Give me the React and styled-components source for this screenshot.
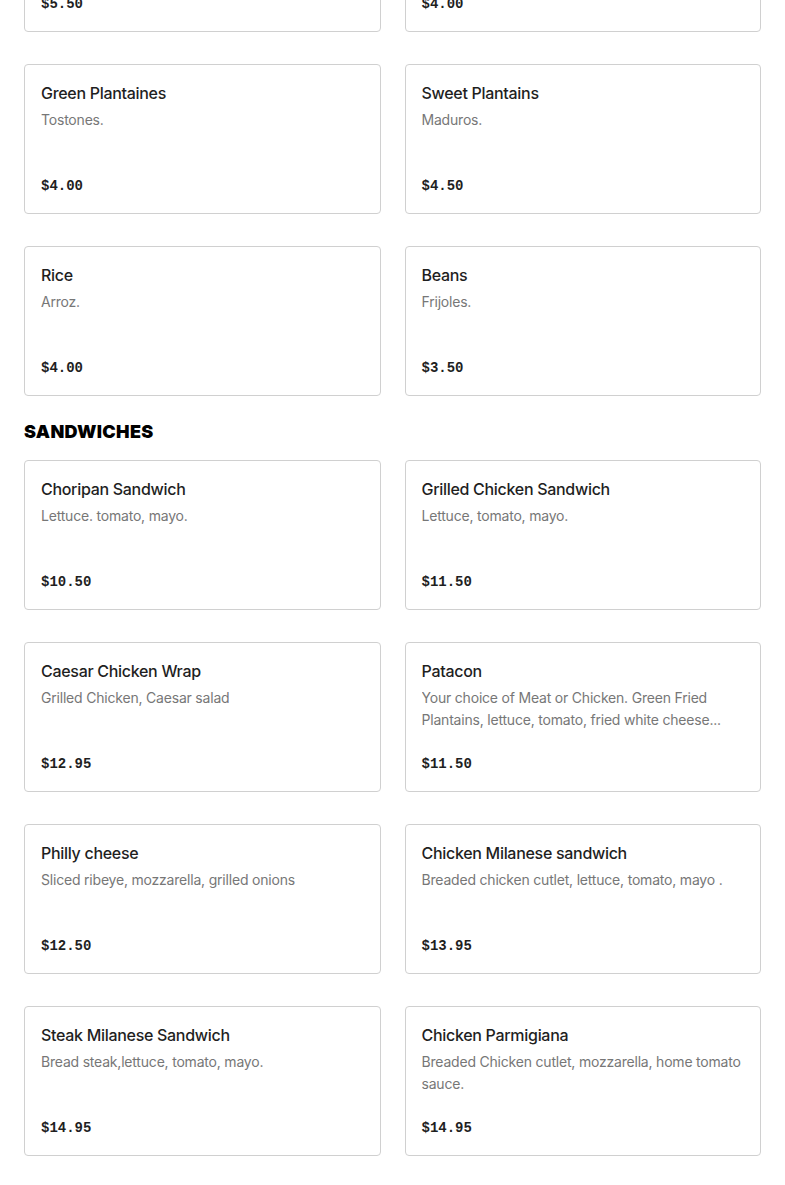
import styled, { createGlobalStyle } from "styled-components"

const GlobalStyle = createGlobalStyle`
  body {
    margin: 0;
    background: #fff;
    font-family: Inter, "Noto Sans", sans-serif;
    color: #191919;
  }
`;

const Page = styled.main`
  padding: 0 24px;
  margin-top: -118px;
`;

const Heading = styled.h2`
  margin: 24px 0 16px;
  font-size: 18px;
  line-height: 24px;
  font-weight: 900;
  letter-spacing: 0.3px;
  color: #000;
`;

const Grid = styled.div`
  display: grid;
  grid-template-columns: 1fr 1fr;
  column-gap: 24px;
  row-gap: 32px;
`;

const Card = styled.div`
  box-sizing: border-box;
  height: 150px;
  padding: 16px;
  border: 1px solid #d0d0d0;
  border-radius: 4px;
  display: flex;
  flex-direction: column;
`;

const Title = styled.div`
  font-size: 16px;
  line-height: 24px;
  font-weight: 500;
  letter-spacing: -0.3px;
  color: #1f1f1f;
`;

const Desc = styled.div`
  margin-top: 4px;
  font-size: 14px;
  line-height: 22px;
  letter-spacing: -0.2px;
  color: #777;
  display: -webkit-box;
  -webkit-line-clamp: 2;
  -webkit-box-orient: vertical;
  overflow: hidden;
`;

const Price = styled.div`
  margin-top: auto;
  font-family: "Liberation Mono", "DejaVu Sans Mono", monospace;
  font-size: 14px;
  line-height: 22px;
  font-weight: 700;
  color: #1f1f1f;
`;

const sections = [
  {
    title: null,
    items: [
      { name: "Yuca Fries", desc: "Yuca frita.", price: "$5.50" },
      { name: "French Fries", desc: "Papas fritas.", price: "$4.00" },
      { name: "Green Plantaines", desc: "Tostones.", price: "$4.00" },
      { name: "Sweet Plantains", desc: "Maduros.", price: "$4.50" },
      { name: "Rice", desc: "Arroz.", price: "$4.00" },
      { name: "Beans", desc: "Frijoles.", price: "$3.50" },
    ],
  },
  {
    title: "SANDWICHES",
    items: [
      { name: "Choripan Sandwich", desc: "Lettuce. tomato, mayo.", price: "$10.50" },
      { name: "Grilled Chicken Sandwich", desc: "Lettuce, tomato, mayo.", price: "$11.50" },
      { name: "Caesar Chicken Wrap", desc: "Grilled Chicken, Caesar salad", price: "$12.95" },
      {
        name: "Patacon",
        desc: "Your choice of Meat or Chicken. Green Fried Plantains, lettuce, tomato, fried white cheese...",
        price: "$11.50",
      },
      { name: "Philly cheese", desc: "Sliced ribeye, mozzarella, grilled onions", price: "$12.50" },
      { name: "Chicken Milanese sandwich", desc: "Breaded chicken cutlet, lettuce, tomato, mayo .", price: "$13.95" },
      { name: "Steak Milanese Sandwich", desc: "Bread steak,lettuce, tomato, mayo.", price: "$14.95" },
      { name: "Chicken Parmigiana", desc: "Breaded Chicken cutlet, mozzarella, home tomato sauce.", price: "$14.95" },
    ],
  },
  { title: "BEVERAGES", items: [] },
];

const App = () => {
  return (
    <Page>
      <GlobalStyle />
      {sections.map((section, i) => (
        <section key={i}>
          {section.title && <Heading>{section.title}</Heading>}
          <Grid>
            {section.items.map((item) => (
              <Card key={item.name}>
                <Title>{item.name}</Title>
                <Desc>{item.desc}</Desc>
                <Price>{item.price}</Price>
              </Card>
            ))}
          </Grid>
        </section>
      ))}
    </Page>
  )
}

export default App
